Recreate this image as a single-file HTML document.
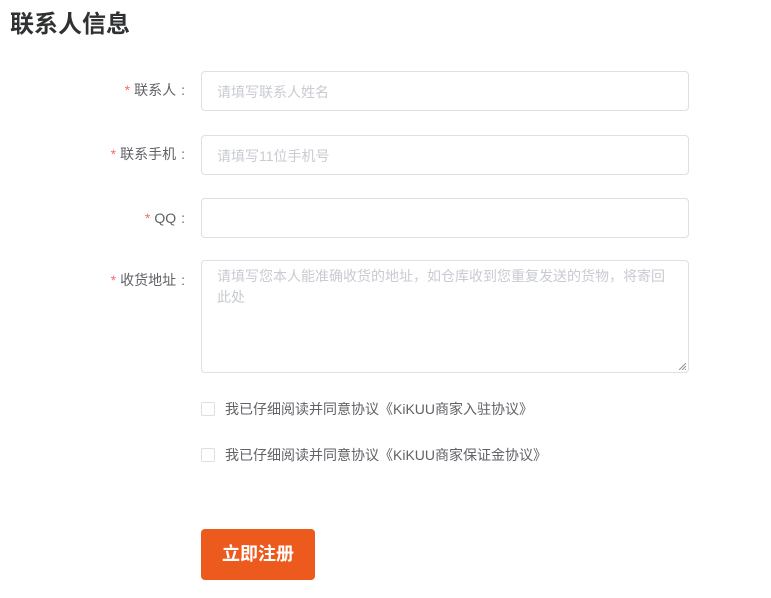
<!DOCTYPE html><html><head><meta charset="utf-8"><style>
body{margin:0;background:#fff;font-family:"Liberation Sans","Noto Sans CJK SC",sans-serif;width:771px;height:598px;position:relative;overflow:hidden}
h1{position:absolute;left:10px;top:8px;margin:0;font-size:24px;font-weight:bold;color:#303133;line-height:34px}
.lbl{position:absolute;right:586px;font-size:14px;color:#606266;line-height:20px;white-space:nowrap}
.lbl i{font-style:normal;color:#f56c6c;margin-right:4px}
.lbl b{font-weight:normal;margin-left:5px}
.in{position:absolute;left:201px;border:1px solid #dcdfe6;border-radius:4px;font-size:14px;color:#c8cbd1;padding:0 15px;box-sizing:border-box;width:488px}
.cb{position:absolute;left:201px;width:12px;height:12px;border:1px solid #dcdfe6;border-radius:2px}
.ct{position:absolute;left:225px;font-size:14px;color:#606266;line-height:20px}
.btn{position:absolute;left:201px;top:529px;width:114px;height:51px;background:#ec5a1e;border-radius:4px;color:#fff;font-weight:bold;font-size:18px;text-align:center;line-height:51px}
</style></head><body>
<h1>联系人信息</h1>
<div class="lbl" style="top:80px"><i>*</i>联系人<b>:</b></div>
<div class="in" style="top:71px;height:40px;line-height:40px">请填写联系人姓名</div>
<div class="lbl" style="top:144px"><i>*</i>联系手机<b>:</b></div>
<div class="in" style="top:135px;height:40px;line-height:40px">请填写11位手机号</div>
<div class="lbl" style="top:208px"><i>*</i>QQ<b>:</b></div>
<div class="in" style="top:198px;height:40px"></div>
<div class="lbl" style="top:270px"><i>*</i>收货地址<b>:</b></div>
<div class="in" style="top:260px;height:113px;padding-top:5px;line-height:21px">请填写您本人能准确收货的地址，如仓库收到您重复发送的货物，将寄回此处
<svg style="position:absolute;right:2px;bottom:2px" width="7" height="7"><path d="M0 7L7 0M3 7L7 3M6 7L7 6" stroke="#909399" stroke-width="1"/></svg></div>
<div class="cb" style="top:402px"></div><div class="ct" style="top:399px">我已仔细阅读并同意协议《KiKUU商家入驻协议》</div>
<div class="cb" style="top:448px"></div><div class="ct" style="top:445px">我已仔细阅读并同意协议《KiKUU商家保证金协议》</div>
<div class="btn">立即注册</div>
</body></html>
